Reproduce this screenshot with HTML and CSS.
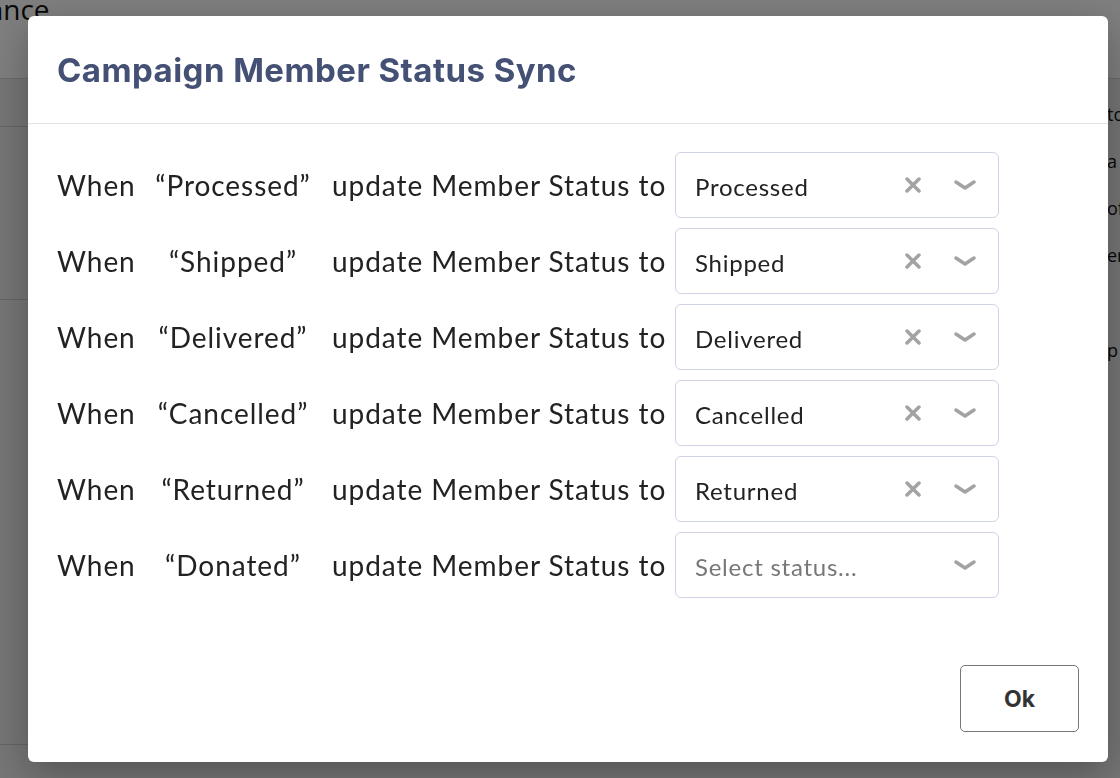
FILE: index.html
```html
<!DOCTYPE html>
<html>
  <head>
    <meta charset="utf-8" />
    <title>Campaign Member Status Sync</title>
    <link rel="stylesheet" href="styles.css">
  </head>
  <body>
    <div class="page">
      <div class="page-top"><span class="page-title">Compliance</span></div>
      <div class="page-content">
        <div class="page-sections">
          <div class="page-bar"></div>
          <div class="page-section"></div>
          <div class="page-section tall"></div>
        </div>
        <div class="side-text">
          <p>to</p>
          <p>a f</p>
          <p>of</p>
          <p>er</p>
          <p class="gap">p</p>
        </div>
      </div>
    </div>

    <div class="overlay"></div>

    <div class="modal">
      <div class="modal-header">
        <h1>Campaign Member Status Sync</h1>
      </div>

      <div class="modal-body">
        <div class="rule">
          <span class="when">When</span>
          <span class="quote">&ldquo;Processed&rdquo;</span>
          <span class="update">update Member Status to</span>
          <div class="select">
            <span class="value">Processed</span>
            <svg class="clear" viewBox="0 0 16 16"><path d="M2 2 L14 14 M14 2 L2 14" /></svg>
            <svg class="chevron" viewBox="0 0 22 10"><path d="M2 2 L11 8 L20 2" /></svg>
          </div>
        </div>
        <div class="rule">
          <span class="when">When</span>
          <span class="quote">&ldquo;Shipped&rdquo;</span>
          <span class="update">update Member Status to</span>
          <div class="select">
            <span class="value">Shipped</span>
            <svg class="clear" viewBox="0 0 16 16"><path d="M2 2 L14 14 M14 2 L2 14" /></svg>
            <svg class="chevron" viewBox="0 0 22 10"><path d="M2 2 L11 8 L20 2" /></svg>
          </div>
        </div>
        <div class="rule">
          <span class="when">When</span>
          <span class="quote">&ldquo;Delivered&rdquo;</span>
          <span class="update">update Member Status to</span>
          <div class="select">
            <span class="value">Delivered</span>
            <svg class="clear" viewBox="0 0 16 16"><path d="M2 2 L14 14 M14 2 L2 14" /></svg>
            <svg class="chevron" viewBox="0 0 22 10"><path d="M2 2 L11 8 L20 2" /></svg>
          </div>
        </div>
        <div class="rule">
          <span class="when">When</span>
          <span class="quote">&ldquo;Cancelled&rdquo;</span>
          <span class="update">update Member Status to</span>
          <div class="select">
            <span class="value">Cancelled</span>
            <svg class="clear" viewBox="0 0 16 16"><path d="M2 2 L14 14 M14 2 L2 14" /></svg>
            <svg class="chevron" viewBox="0 0 22 10"><path d="M2 2 L11 8 L20 2" /></svg>
          </div>
        </div>
        <div class="rule">
          <span class="when">When</span>
          <span class="quote">&ldquo;Returned&rdquo;</span>
          <span class="update">update Member Status to</span>
          <div class="select">
            <span class="value">Returned</span>
            <svg class="clear" viewBox="0 0 16 16"><path d="M2 2 L14 14 M14 2 L2 14" /></svg>
            <svg class="chevron" viewBox="0 0 22 10"><path d="M2 2 L11 8 L20 2" /></svg>
          </div>
        </div>
        <div class="rule">
          <span class="when">When</span>
          <span class="quote">&ldquo;Donated&rdquo;</span>
          <span class="update">update Member Status to</span>
          <div class="select">
            <span class="value placeholder">Select status...</span>
            <svg class="chevron" viewBox="0 0 22 10"><path d="M2 2 L11 8 L20 2" /></svg>
          </div>
        </div>
      </div>

      <div class="modal-footer">
        <button class="ok">Ok</button>
      </div>
    </div>
  </body>
</html>
```

FILE: styles.css
```css
body,div,h1,p,button {margin:0;padding:0}

body {
  width: 1120px;
  height: 778px;
  overflow: hidden;
  background-color: #ececec;
  font-family: 'Lato', 'Open Sans', sans-serif;
  color: #222;
}

/* underlying page, dimmed by the overlay */
.page {
  height: 778px;
}

.page-top {
  display: flow-root;
  height: 78px;
  background-color: #fff;
  border-bottom: 1px solid #d6d6d6;
}

.page-title {
  display: block;
  margin-top: -10px;
  margin-left: -104px;
  font-family: 'Open Sans', sans-serif;
  font-size: 28px;
  color: #111;
}

.page-content {
  display: grid;
  grid-template-columns: 1090px 1fr;
}

.page-bar {
  height: 47px;
  border-bottom: 1px solid #ccc;
}

.page-section {
  height: 172px;
  border-bottom: 1px solid #ccc;
}

.page-section.tall {
  height: 444px;
}

.side-text {
  padding-top: 12px;
  padding-left: 17px;
  white-space: nowrap;
  font-family: 'Open Sans', sans-serif;
  font-size: 18px;
  color: #111;
}

.side-text p {
  height: 47px;
  line-height: 47px;
}

.side-text p.gap {
  margin-top: 48px;
}

.overlay {
  position: fixed;
  top: 0;
  left: 0;
  right: 0;
  bottom: 0;
  background-color: rgba(0, 0, 0, 0.5);
}

/* MODAL */
.modal {
  position: fixed;
  top: 16px;
  left: 28px;
  width: 1080px;
  height: 746px;
  background-color: #fff;
  border-radius: 6px;
  box-shadow: 0 12px 40px rgba(0, 0, 0, 0.3);
  display: flex;
  flex-direction: column;
}

.modal-header {
  height: 107px;
  border-bottom: 1px solid #e2e2e2;
  padding-left: 29px;
  display: flex;
  align-items: center;
}

.modal-header h1 {
  font-family: 'Inter', sans-serif;
  font-weight: 700;
  font-size: 33px;
  letter-spacing: 0.45px;
  color: #445074;
}

.modal-body {
  padding: 28px 29px 0 29px;
  display: flex;
  flex-direction: column;
  gap: 10px;
  flex: 1;
}

.rule {
  display: grid;
  grid-template-columns: 88px 176px 354px 324px;
  align-items: center;
  font-size: 28px;
  letter-spacing: 0.95px;
}

.quote {
  text-align: center;
}

.update {
  padding-left: 11px;
}

.select {
  height: 64px;
  border: 1px solid #cfd3e6;
  border-radius: 6px;
  display: flex;
  align-items: center;
  padding-left: 19px;
  padding-right: 22px;
  letter-spacing: 0.75px;
}

.value {
  flex: 1;
  font-size: 24px;
  color: #222;
  padding-top: 2px;
}

.value.placeholder {
  color: #777;
}

.clear,
.chevron {
  fill: none;
  stroke: #a3a3a3;
  stroke-width: 3.5;
  stroke-linecap: round;
  stroke-linejoin: round;
}

.clear {
  width: 16px;
  height: 16px;
  margin-right: 33px;
}

.chevron {
  width: 22px;
  height: 10px;
}

.modal-footer {
  display: flex;
  justify-content: flex-end;
  padding: 0 29px 30px 0;
}

.ok {
  width: 119px;
  height: 67px;
  background-color: #fff;
  border: 1px solid #777;
  border-radius: 5px;
  font-family: 'Inter', sans-serif;
  font-weight: 700;
  font-size: 23px;
  color: #333;
}
```
